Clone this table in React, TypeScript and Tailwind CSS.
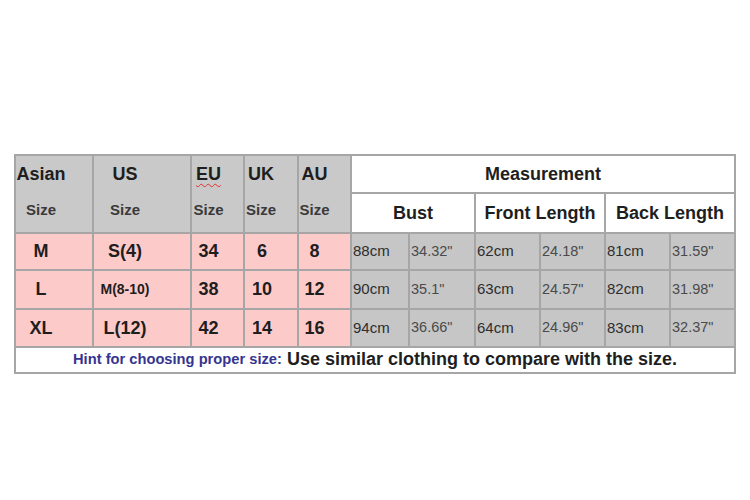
import React from "react";

const rows = [
  { asian: "M", us: "S(4)", usSmall: false, eu: "34", uk: "6", au: "8", m: ["88cm", "34.32\"", "62cm", "24.18\"", "81cm", "31.59\""] },
  { asian: "L", us: "M(8-10)", usSmall: true, eu: "38", uk: "10", au: "12", m: ["90cm", "35.1\"", "63cm", "24.57\"", "82cm", "31.98\""] },
  { asian: "XL", us: "L(12)", usSmall: false, eu: "42", uk: "14", au: "16", m: ["94cm", "36.66\"", "64cm", "24.96\"", "83cm", "32.37\""] },
];

function HeadCell({ top, pr, eu }: { top: string; pr: string; eu?: boolean }) {
  return (
    <div className={`row-span-2 flex flex-col bg-[#c9c9c9] text-center ${pr}`}>
      <div className="flex h-[36px] items-center justify-center text-[18px] font-bold text-[#1e1e1e]">
        <span className={eu ? "underline decoration-wavy decoration-[#e03030] decoration-1 underline-offset-[3px]" : ""}>{top}</span>
      </div>
      <div className="flex flex-1 items-center justify-center pb-[4px] text-[15px] font-bold text-[#3a3a3a]">Size</div>
    </div>
  );
}

export default function App() {
  return (
    <div className="min-h-[500px] w-[750px] bg-white pt-[154px] pl-[14px]" style={{ fontFamily: '"Liberation Sans", Arial, sans-serif' }}>
      <div className="grid w-[722px] grid-cols-[76px_96px_51px_52px_51px_56px_64px_63px_63px_63px_63px] grid-rows-[36px_38px_35px_37px_36px_24px] gap-[2px] bg-[#a6a6a6] p-[2px]">
        <HeadCell top="Asian" pr="pr-[26px]" />
        <HeadCell top="US" pr="pr-[34px]" />
        <HeadCell top="EU" pr="pr-[18px]" eu />
        <HeadCell top="UK" pr="pr-[20px]" />
        <HeadCell top="AU" pr="pr-[20px]" />
        <div className="col-span-6 flex items-center justify-center bg-white text-[18px] font-bold text-[#1e1e1e]">Measurement</div>
        <div className="col-span-2 flex items-center justify-center bg-white text-[18px] font-bold text-[#1e1e1e]">Bust</div>
        <div className="col-span-2 flex items-center justify-center bg-white text-[18px] font-bold text-[#1e1e1e]">Front Length</div>
        <div className="col-span-2 flex items-center justify-center bg-white text-[18px] font-bold text-[#1e1e1e]">Back Length</div>
        {rows.map((r) => (
          <React.Fragment key={r.asian}>
            <div className="flex items-center justify-center bg-[#fdcaca] pr-[26px] text-[18px] font-bold text-[#1e1e1e]">{r.asian}</div>
            <div className={`flex items-center justify-center bg-[#fdcaca] pr-[34px] font-bold text-[#1e1e1e] ${r.usSmall ? "text-[14px]" : "text-[18px]"}`}>{r.us}</div>
            <div className="flex items-center justify-center bg-[#fdcaca] pr-[18px] text-[18px] font-bold text-[#1e1e1e]">{r.eu}</div>
            <div className="flex items-center justify-center bg-[#fdcaca] pr-[18px] text-[18px] font-bold text-[#1e1e1e]">{r.uk}</div>
            <div className="flex items-center justify-center bg-[#fdcaca] pr-[20px] text-[18px] font-bold text-[#1e1e1e]">{r.au}</div>
            {r.m.map((v, i) => (
              <div
                key={i}
                className={`flex items-center bg-[#c6c6c6] pl-[1px] ${i % 2 === 0 ? "text-[15px] text-[#2e2e2e]" : "text-[14.5px] text-[#4a4a4a]"}`}
              >
                {v}
              </div>
            ))}
          </React.Fragment>
        ))}
        <div className="col-span-11 flex items-center justify-center bg-white pb-[1px]">
          <span className="text-[14.7px] font-bold text-[#35358f]">Hint for choosing proper size:</span>
          <span className="ml-[5px] text-[18px] font-bold text-[#1e1e1e]">Use similar clothing to compare with the size.</span>
        </div>
      </div>
    </div>
  );
}
